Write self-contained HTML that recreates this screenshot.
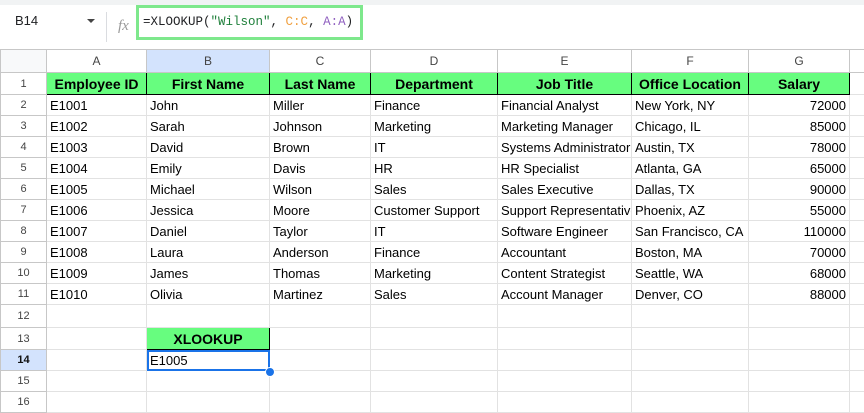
<!DOCTYPE html>
<html><head><style>
body{margin:0;width:864px;height:401px;overflow:hidden;background:#fff;font-family:"Liberation Sans",Arial,sans-serif;position:relative}
.top{position:absolute;left:0;top:0;width:864px;height:5px;background:#f1f3f4}
.nb{position:absolute;left:15px;top:13px;font-size:13px;color:#202124}
.arr{position:absolute;left:87px;top:19px;width:0;height:0;border-left:4px solid transparent;border-right:4px solid transparent;border-top:4px solid #444}
.sep{position:absolute;left:106px;top:12px;width:1px;height:30px;background:#dadce0}
.fx{position:absolute;left:118px;top:18px;font-style:italic;color:#999;font-family:"Liberation Serif",serif;font-size:15px}
.fb{position:absolute;left:136px;top:5px;width:217px;height:29px;border:3px solid #7ee88c;font-family:"Liberation Mono",monospace;font-size:12.5px;line-height:29px;padding-left:4px;color:#202124}
table{position:absolute;left:0;top:49px;width:864px;border-collapse:collapse;table-layout:fixed;font-size:13px;color:#000}
td{border:1px solid #e2e2e2;padding:0 3px;white-space:nowrap;overflow:hidden;height:20px}
tr.h td{background:#fff;color:#444;text-align:center;font-size:12px;height:22px;border-color:#c7c7c7}
td.rh{text-align:center;font-size:11px;color:#444;padding:0;border-color:#c7c7c7}
tr.g td.c{background:#67fd7f;font-weight:bold;text-align:center;border:1px solid #000;font-size:14px}
.r{text-align:right}
</style></head><body>
<div class="top"></div>
<div class="nb">B14</div><div class="arr"></div><div class="sep"></div><div class="fx">fx</div>
<div class="fb">=XLOOKUP(<span style="color:#1e7f3a">"Wilson"</span>, <span style="color:#f0a040">C:C</span>, <span style="color:#9060c0">A:A</span>)</div>
<table>
<colgroup><col style="width:46px"><col style="width:100px"><col style="width:123px"><col style="width:101px"><col style="width:127px"><col style="width:134px"><col style="width:117px"><col style="width:101px"><col style="width:15px"></colgroup>
<tr class="h"><td style="background:#f8f9fa"></td><td>A</td><td style="background:#d3e3fd">B</td><td>C</td><td>D</td><td>E</td><td>F</td><td>G</td><td></td></tr>
<tr class="g" style="height:22px"><td class="rh">1</td><td class="c">Employee ID</td><td class="c">First Name</td><td class="c">Last Name</td><td class="c">Department</td><td class="c">Job Title</td><td class="c">Office Location</td><td class="c">Salary</td><td></td></tr>
<tr><td class="rh">2</td><td>E1001</td><td>John</td><td>Miller</td><td>Finance</td><td>Financial Analyst</td><td>New York, NY</td><td class="r">72000</td><td></td></tr>
<tr><td class="rh">3</td><td>E1002</td><td>Sarah</td><td>Johnson</td><td>Marketing</td><td>Marketing Manager</td><td>Chicago, IL</td><td class="r">85000</td><td></td></tr>
<tr><td class="rh">4</td><td>E1003</td><td>David</td><td>Brown</td><td>IT</td><td>Systems Administrator</td><td>Austin, TX</td><td class="r">78000</td><td></td></tr>
<tr><td class="rh">5</td><td>E1004</td><td>Emily</td><td>Davis</td><td>HR</td><td>HR Specialist</td><td>Atlanta, GA</td><td class="r">65000</td><td></td></tr>
<tr><td class="rh">6</td><td>E1005</td><td>Michael</td><td>Wilson</td><td>Sales</td><td>Sales Executive</td><td>Dallas, TX</td><td class="r">90000</td><td></td></tr>
<tr><td class="rh">7</td><td>E1006</td><td>Jessica</td><td>Moore</td><td>Customer Support</td><td>Support Representative</td><td>Phoenix, AZ</td><td class="r">55000</td><td></td></tr>
<tr><td class="rh">8</td><td>E1007</td><td>Daniel</td><td>Taylor</td><td>IT</td><td>Software Engineer</td><td>San Francisco, CA</td><td class="r">110000</td><td></td></tr>
<tr><td class="rh">9</td><td>E1008</td><td>Laura</td><td>Anderson</td><td>Finance</td><td>Accountant</td><td>Boston, MA</td><td class="r">70000</td><td></td></tr>
<tr><td class="rh">10</td><td>E1009</td><td>James</td><td>Thomas</td><td>Marketing</td><td>Content Strategist</td><td>Seattle, WA</td><td class="r">68000</td><td></td></tr>
<tr><td class="rh">11</td><td>E1010</td><td>Olivia</td><td>Martinez</td><td>Sales</td><td>Account Manager</td><td>Denver, CO</td><td class="r">88000</td><td></td></tr>
<tr style="height:23px"><td class="rh">12</td><td></td><td></td><td></td><td></td><td></td><td></td><td></td><td></td></tr>
<tr class="g" style="height:22px"><td class="rh">13</td><td></td><td class="c">XLOOKUP</td><td></td><td></td><td></td><td></td><td></td><td></td></tr>
<tr><td class="rh" style="background:#d3e3fd;font-weight:bold;color:#111">14</td><td></td><td style="outline:2px solid #1a73e8;outline-offset:-2px">E1005</td><td></td><td></td><td></td><td></td><td></td><td></td></tr>
<tr><td class="rh">15</td><td></td><td></td><td></td><td></td><td></td><td></td><td></td><td></td></tr>
<tr><td class="rh">16</td><td></td><td></td><td></td><td></td><td></td><td></td><td></td><td></td></tr>
</table>
<div style="position:absolute;left:265px;top:367px;width:8px;height:8px;border-radius:50%;background:#1a73e8;border:1px solid #fff"></div>
</body></html>
